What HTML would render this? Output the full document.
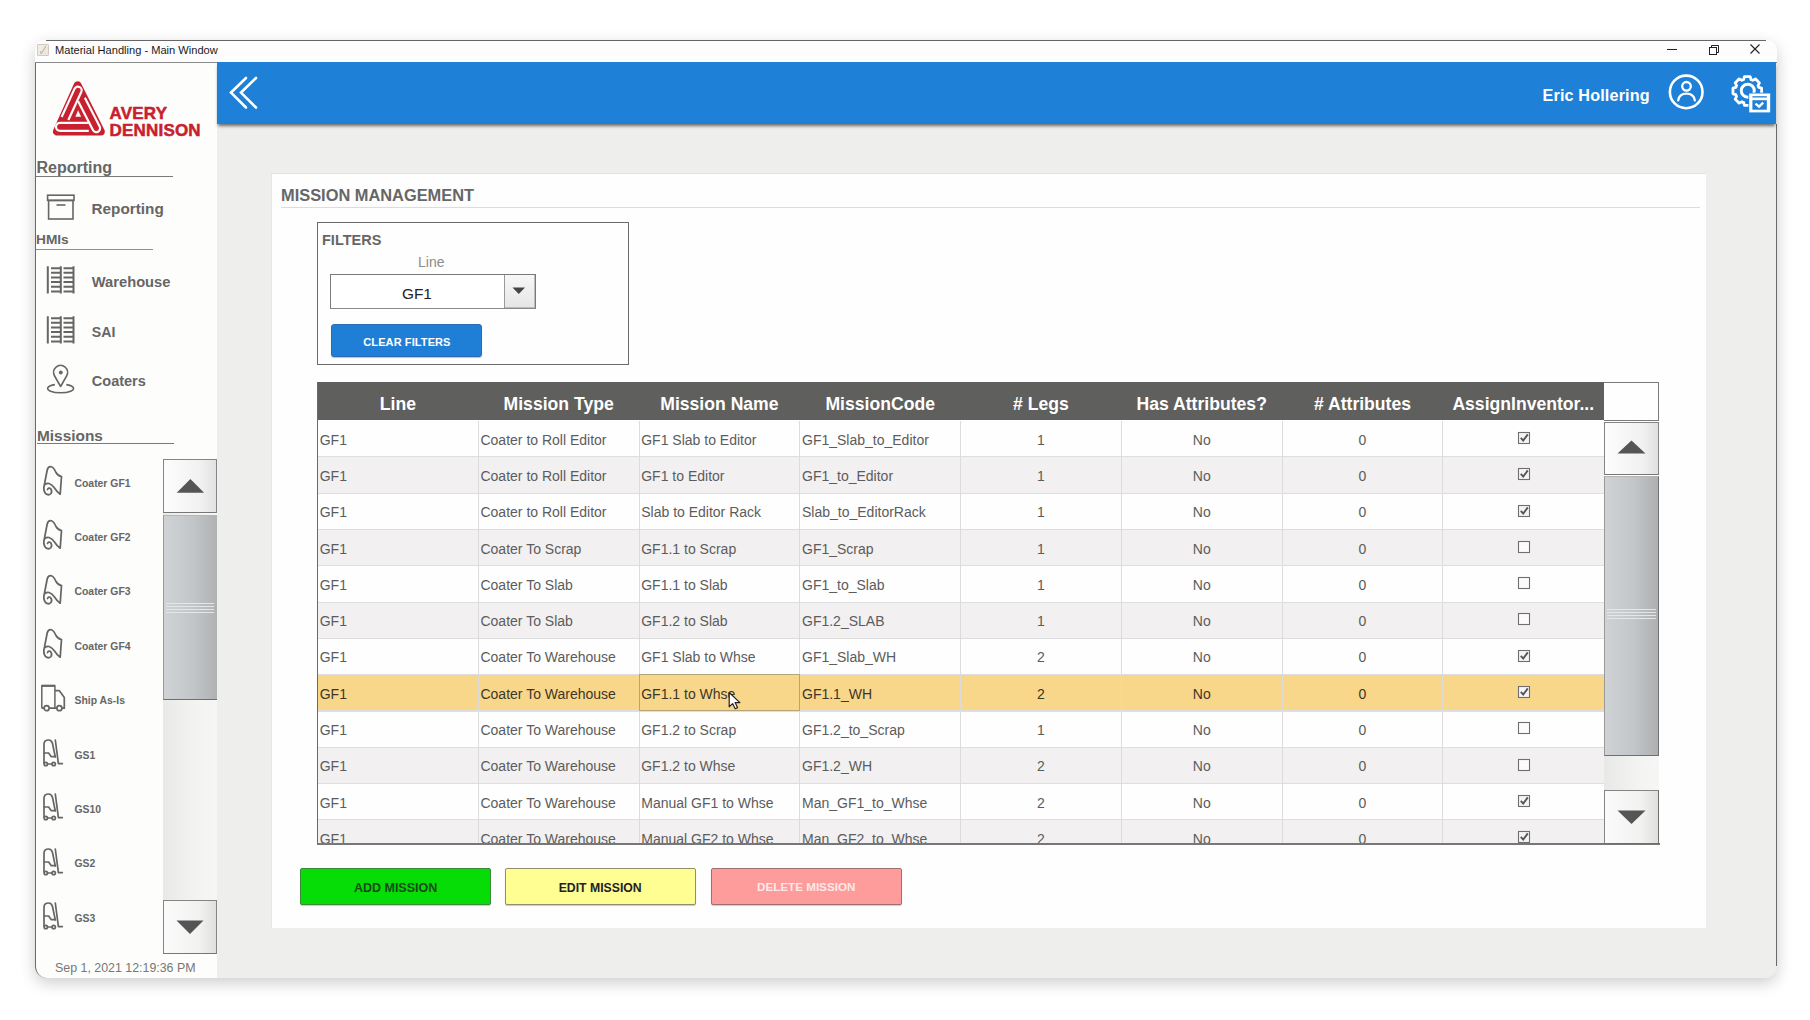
<!DOCTYPE html><html><head><meta charset="utf-8"><title>Material Handling</title><style>
*{margin:0;padding:0;box-sizing:border-box}
html,body{width:1810px;height:1020px;overflow:hidden;background:#fff;font-family:"Liberation Sans", sans-serif}
.a{position:absolute}
.t{position:absolute;white-space:nowrap;line-height:1}
</style></head><body><div class="a" style="left:35px;top:40px;width:1742px;height:938px;border-radius:12px;box-shadow:0 5px 16px rgba(0,0,0,0.2);background:#eeeeed"></div>
<div class="a" style="left:35px;top:40px;width:1742px;height:23px;background:#fdfdfd;border-radius:10px 10px 0 0"></div>
<div class="a" style="left:46px;top:40px;width:1720px;height:1.2px;background:#666"></div>
<div class="a" style="left:35px;top:62px;width:1742px;height:1px;background:#8a8a8a"></div>
<div class="a" style="left:37px;top:44px;width:12px;height:12px;border:1px solid #cfcac2;background:linear-gradient(135deg,#f4efe6,#e9e4dc);border-radius:1px"></div>
<svg class="a" style="left:37px;top:44px" width="12" height="12"><path d="M4 10 L9 2" stroke="#c9b9a0" stroke-width="1.2"/><path d="M3.5 7 L4 10" stroke="#b8b8d0" stroke-width="1"/></svg>
<div class="t" style="left:55px;top:44.60px;font-size:11.1px;font-weight:400;color:#1a1a1a;">Material Handling - Main Window</div>
<div class="a" style="left:1667px;top:49px;width:10px;height:1px;background:#222"></div>
<svg class="a" style="left:1706px;top:43px" width="14" height="14"><rect x="3.5" y="4.5" width="7" height="7" fill="none" stroke="#222" stroke-width="1"/><path d="M5.5 4.5 V2.5 H12.5 V9.5 H10.5" fill="none" stroke="#222" stroke-width="1"/></svg>
<svg class="a" style="left:1748px;top:42px" width="14" height="14"><path d="M2.5 2.5 L11.5 11.5 M11.5 2.5 L2.5 11.5" stroke="#222" stroke-width="1.1"/></svg>
<div class="a" style="left:35px;top:63px;width:182px;height:915px;background:#fdfdfc;border-left:1.5px solid #6a6a6a;border-radius:0 0 0 12px"></div>
<div class="a" style="left:1775.5px;top:124px;width:1.5px;height:842px;background:#6a6a6a"></div>
<div class="a" style="left:217px;top:62px;width:1559px;height:62px;background:#1f80d8;box-shadow:0 3px 3px -1px rgba(0,0,0,0.55)"></div>
<svg class="a" style="left:224px;top:72px" width="40" height="42"><path d="M22 6 L7 20.6 L22 35.5" fill="none" stroke="#fff" stroke-width="2.6" stroke-linecap="round" stroke-linejoin="miter"/><path d="M32 6 L17 20.6 L32 35.5" fill="none" stroke="#fff" stroke-width="2.6" stroke-linecap="round" stroke-linejoin="miter"/></svg>
<div class="t" style="left:1542.5px;top:87.29px;font-size:16.2px;font-weight:700;color:#fff;letter-spacing:0.15px">Eric Hollering</div>
<svg class="a" style="left:1666px;top:72px" width="41" height="41"><circle cx="20.2" cy="19.9" r="16.3" fill="none" stroke="#fff" stroke-width="2.6"/><circle cx="20.5" cy="14.3" r="4.3" fill="none" stroke="#fff" stroke-width="2.3"/><path d="M12.2 28.3 Q13.2 21.6 20.5 21.6 Q27.8 21.6 28.8 28.3" fill="none" stroke="#fff" stroke-width="2.3" stroke-linecap="round"/></svg>
<svg class="a" style="left:1730px;top:74px" width="44" height="42"><path d="M13.59 5.59 L14.45 2.68 L20.15 2.68 L21.01 5.59 L21.60 5.80 L22.18 6.04 L22.75 6.31 L25.41 4.86 L29.44 8.89 L27.99 11.55 L28.26 12.12 L28.50 12.70 L28.71 13.29 L31.62 14.15 L31.62 19.85 L28.71 20.71 L28.50 21.30 L28.26 21.88 L27.99 22.45 L29.44 25.11 L25.41 29.14 L22.75 27.69 L22.18 27.96 L21.60 28.20 L21.01 28.41 L20.15 31.32 L14.45 31.32 L13.59 28.41 L13.00 28.20 L12.42 27.96 L11.85 27.69 L9.19 29.14 L5.16 25.11 L6.61 22.45 L6.34 21.88 L6.10 21.30 L5.89 20.71 L2.98 19.85 L2.98 14.15 L5.89 13.29 L6.10 12.70 L6.34 12.12 L6.61 11.55 L5.16 8.89 L9.19 4.86 L11.85 6.31 L12.42 6.04 L13.00 5.80 Z" fill="none" stroke="#fff" stroke-width="2.8" stroke-linejoin="round"/><circle cx="17.8" cy="16.7" r="6.5" fill="none" stroke="#fff" stroke-width="3"/><rect x="18.4" y="18.7" width="22.6" height="20.5" fill="#1f80d8"/><rect x="19.2" y="19.5" width="21" height="18.9" fill="#fff"/><rect x="22.4" y="22.2" width="14.4" height="1.3" fill="#1f80d8"/><rect x="22.4" y="26.2" width="14.4" height="9.5" fill="#1f80d8"/><path d="M25.5 29.6 L29.1 32.6 L33.2 28.7" fill="none" stroke="#fff" stroke-width="2.4"/></svg>
<svg class="a" style="left:48px;top:76px" width="60" height="64" viewBox="0 0 60 64"><path d="M29.6 9.3 L9 55.5 L52.8 55.5 Z" fill="#c8202f" stroke="#c8202f" stroke-width="8" stroke-linejoin="round"/><g fill="none" stroke="#fdfbfb" stroke-width="2.2"><path d="M20.36 44.04 L33.36 15.74 A3.7 3.7 0 0 0 26.64 12.66 L13.64 40.96"/><path d="M40.80 46.80 L12.00 46.80 A4.0 4.0 0 0 0 12.00 54.80 L40.80 54.80"/><path d="M30.12 25.24 L44.92 54.04 A3.8 3.8 0 0 0 51.68 50.56 L36.88 21.76"/></g><path d="M30.1 34.2 L27.4 40.8 L33.1 40.8 Z" fill="#fdfbfb"/></svg>
<div class="t" style="left:109.5px;top:105.31px;font-size:17px;font-weight:700;color:#c8202f;letter-spacing:0.2px;-webkit-text-stroke:0.5px #c8202f">AVERY</div>
<div class="t" style="left:109.5px;top:121.61px;font-size:17px;font-weight:700;color:#c8202f;letter-spacing:0.2px;-webkit-text-stroke:0.5px #c8202f">DENNISON</div>
<div class="t" style="left:36.5px;top:159.96px;font-size:16px;font-weight:700;color:#666;">Reporting</div>
<div class="a" style="left:36px;top:176px;width:137px;height:1px;background:#7a7a7a"></div>
<svg class="a" style="left:45px;top:192px" width="32" height="30"><rect x="2.6" y="3.2" width="26.4" height="5.2" fill="none" stroke="#666" stroke-width="1.6"/><rect x="3.6" y="8.4" width="24.4" height="18.6" fill="none" stroke="#666" stroke-width="1.6"/><path d="M11.5 13 H20.5" stroke="#666" stroke-width="1.6"/></svg>
<div class="t" style="left:91.5px;top:201.05px;font-size:15.3px;font-weight:700;color:#666;">Reporting</div>
<div class="t" style="left:36px;top:233.40px;font-size:13.7px;font-weight:700;color:#666;">HMIs</div>
<div class="a" style="left:36px;top:248.5px;width:117px;height:1.5px;background:#8f8f8f"></div>
<svg class="a" style="left:40px;top:260px" width="40" height="40"><g stroke="#666" stroke-width="2"><path d="M7.8 6.3 V33.5 M20.8 6.3 V33.5 M33.5 6.3 V33.5"/><path d="M11 8.2 H20.8 M23.5 8.2 H33.5"/><path d="M11 12.7 H20.8 M23.5 12.7 H33.5"/><path d="M11 17.5 H20.8 M23.5 17.5 H33.5"/><path d="M11 22 H20.8 M23.5 22 H33.5"/><path d="M11 26.7 H20.8 M23.5 26.7 H33.5"/><path d="M11 31.4 H20.8 M23.5 31.4 H33.5"/></g></svg>
<div class="t" style="left:91.8px;top:274.56px;font-size:14.7px;font-weight:700;color:#666;">Warehouse</div>
<svg class="a" style="left:40px;top:310px" width="40" height="40"><g stroke="#666" stroke-width="2"><path d="M7.8 6.3 V33.5 M20.8 6.3 V33.5 M33.5 6.3 V33.5"/><path d="M11 8.2 H20.8 M23.5 8.2 H33.5"/><path d="M11 12.7 H20.8 M23.5 12.7 H33.5"/><path d="M11 17.5 H20.8 M23.5 17.5 H33.5"/><path d="M11 22 H20.8 M23.5 22 H33.5"/><path d="M11 26.7 H20.8 M23.5 26.7 H33.5"/><path d="M11 31.4 H20.8 M23.5 31.4 H33.5"/></g></svg>
<div class="t" style="left:91.8px;top:325.06px;font-size:14.1px;font-weight:700;color:#666;">SAI</div>
<svg class="a" style="left:40px;top:360px" width="40" height="40"><g fill="none" stroke="#666" stroke-width="1.6"><path d="M20.6 26.5 L14.6 16 A7 7 0 1 1 26.6 16 Z" stroke-linejoin="round"/><path d="M14.9 24.6 A13 4.3 0 1 0 26.3 24.6"/></g><circle cx="20.8" cy="12.5" r="1.9" fill="#666"/></svg>
<div class="t" style="left:91.8px;top:374.23px;font-size:14.5px;font-weight:700;color:#666;">Coaters</div>
<div class="t" style="left:37px;top:427.96px;font-size:15.4px;font-weight:700;color:#666;">Missions</div>
<div class="a" style="left:37px;top:443px;width:137px;height:1px;background:#7a7a7a"></div>
<svg class="a" style="left:38px;top:460.0px" width="40" height="40"><path d="M22.2 34.2 L23.5 16.5 Q20 16 18 12.5 Q15.5 6.5 12.5 6.5 Q10 6.5 9.2 10 L6.5 24 Q4.8 30 7.5 33.5 Q10.5 36 13 33.5 Q14.5 31 12.5 28.5 Q10.5 27.2 9.5 29.5 M7 24.5 Q9 23 11 23.5 Q14 24.5 16.5 28 Q19 32 22.2 34.2" fill="none" stroke="#666" stroke-width="1.75" stroke-linejoin="round" stroke-linecap="round"/></svg>
<div class="t" style="left:74.5px;top:478.50px;font-size:10.4px;font-weight:700;color:#666;">Coater GF1</div>
<svg class="a" style="left:38px;top:514.4px" width="40" height="40"><path d="M22.2 34.2 L23.5 16.5 Q20 16 18 12.5 Q15.5 6.5 12.5 6.5 Q10 6.5 9.2 10 L6.5 24 Q4.8 30 7.5 33.5 Q10.5 36 13 33.5 Q14.5 31 12.5 28.5 Q10.5 27.2 9.5 29.5 M7 24.5 Q9 23 11 23.5 Q14 24.5 16.5 28 Q19 32 22.2 34.2" fill="none" stroke="#666" stroke-width="1.75" stroke-linejoin="round" stroke-linecap="round"/></svg>
<div class="t" style="left:74.5px;top:532.90px;font-size:10.4px;font-weight:700;color:#666;">Coater GF2</div>
<svg class="a" style="left:38px;top:568.8px" width="40" height="40"><path d="M22.2 34.2 L23.5 16.5 Q20 16 18 12.5 Q15.5 6.5 12.5 6.5 Q10 6.5 9.2 10 L6.5 24 Q4.8 30 7.5 33.5 Q10.5 36 13 33.5 Q14.5 31 12.5 28.5 Q10.5 27.2 9.5 29.5 M7 24.5 Q9 23 11 23.5 Q14 24.5 16.5 28 Q19 32 22.2 34.2" fill="none" stroke="#666" stroke-width="1.75" stroke-linejoin="round" stroke-linecap="round"/></svg>
<div class="t" style="left:74.5px;top:587.30px;font-size:10.4px;font-weight:700;color:#666;">Coater GF3</div>
<svg class="a" style="left:38px;top:623.2px" width="40" height="40"><path d="M22.2 34.2 L23.5 16.5 Q20 16 18 12.5 Q15.5 6.5 12.5 6.5 Q10 6.5 9.2 10 L6.5 24 Q4.8 30 7.5 33.5 Q10.5 36 13 33.5 Q14.5 31 12.5 28.5 Q10.5 27.2 9.5 29.5 M7 24.5 Q9 23 11 23.5 Q14 24.5 16.5 28 Q19 32 22.2 34.2" fill="none" stroke="#666" stroke-width="1.75" stroke-linejoin="round" stroke-linecap="round"/></svg>
<div class="t" style="left:74.5px;top:641.70px;font-size:10.4px;font-weight:700;color:#666;">Coater GF4</div>
<svg class="a" style="left:38px;top:679.8000000000001px" width="40" height="40"><g fill="none" stroke="#666" stroke-width="1.7" stroke-linejoin="round"><path d="M3.8 28.2 V5.6 H16.9 V28.2" stroke-width="1.5"/><path d="M3.8 5.9 H16.9" stroke-width="2"/><path d="M16.9 10.6 H21.2 L26.3 17.6 V28.2 H23.8 M19 28.2 H11 M6.1 28.2 H3.8"/><circle cx="8.6" cy="28.2" r="2.5"/><circle cx="21.4" cy="28.2" r="2.5"/></g></svg>
<div class="t" style="left:74.5px;top:696.10px;font-size:10.4px;font-weight:700;color:#666;">Ship As-Is</div>
<svg class="a" style="left:38px;top:735.0px" width="40" height="40"><g fill="none" stroke="#666" stroke-width="1.7" stroke-linecap="round" stroke-linejoin="round"><path d="M6 28 V9 Q6 5 10.6 5 Q13.5 5 14.5 8.5 L17.3 22"/><path d="M6.3 18 H10.6 L13.3 21.7 H17.3"/><circle cx="7.8" cy="29" r="1.7"/><circle cx="15.7" cy="29" r="1.7"/><path d="M9.5 29 H14"/><path d="M17.3 5 L20.4 28.6 H24.3"/></g></svg>
<div class="t" style="left:74.5px;top:750.50px;font-size:10.4px;font-weight:700;color:#666;">GS1</div>
<svg class="a" style="left:38px;top:789.4px" width="40" height="40"><g fill="none" stroke="#666" stroke-width="1.7" stroke-linecap="round" stroke-linejoin="round"><path d="M6 28 V9 Q6 5 10.6 5 Q13.5 5 14.5 8.5 L17.3 22"/><path d="M6.3 18 H10.6 L13.3 21.7 H17.3"/><circle cx="7.8" cy="29" r="1.7"/><circle cx="15.7" cy="29" r="1.7"/><path d="M9.5 29 H14"/><path d="M17.3 5 L20.4 28.6 H24.3"/></g></svg>
<div class="t" style="left:74.5px;top:804.90px;font-size:10.4px;font-weight:700;color:#666;">GS10</div>
<svg class="a" style="left:38px;top:843.8px" width="40" height="40"><g fill="none" stroke="#666" stroke-width="1.7" stroke-linecap="round" stroke-linejoin="round"><path d="M6 28 V9 Q6 5 10.6 5 Q13.5 5 14.5 8.5 L17.3 22"/><path d="M6.3 18 H10.6 L13.3 21.7 H17.3"/><circle cx="7.8" cy="29" r="1.7"/><circle cx="15.7" cy="29" r="1.7"/><path d="M9.5 29 H14"/><path d="M17.3 5 L20.4 28.6 H24.3"/></g></svg>
<div class="t" style="left:74.5px;top:859.30px;font-size:10.4px;font-weight:700;color:#666;">GS2</div>
<svg class="a" style="left:38px;top:898.2px" width="40" height="40"><g fill="none" stroke="#666" stroke-width="1.7" stroke-linecap="round" stroke-linejoin="round"><path d="M6 28 V9 Q6 5 10.6 5 Q13.5 5 14.5 8.5 L17.3 22"/><path d="M6.3 18 H10.6 L13.3 21.7 H17.3"/><circle cx="7.8" cy="29" r="1.7"/><circle cx="15.7" cy="29" r="1.7"/><path d="M9.5 29 H14"/><path d="M17.3 5 L20.4 28.6 H24.3"/></g></svg>
<div class="t" style="left:74.5px;top:913.70px;font-size:10.4px;font-weight:700;color:#666;">GS3</div>
<div class="a" style="left:163px;top:513px;width:54px;height:388px;background:linear-gradient(90deg,#e9e9e8,#f3f3f2 60%,#f6f6f5)"></div>
<div class="a" style="left:163px;top:459px;width:54px;height:54px;background:linear-gradient(90deg,#fdfdfd,#f1f1f1 70%,#e2e2e2);border:1px solid #858585;border-bottom:1.5px solid #777"></div>
<svg class="a" style="left:163px;top:459px" width="54" height="54"><path d="M13.7 33.7 L27.4 20 L41.1 33.7 Z" fill="#555"/></svg>
<div class="a" style="left:163px;top:515px;width:54px;height:185px;background:linear-gradient(90deg,#cfd3d6,#c2c6c9 55%,#b0b1b2);border-left:1px solid #999;border-bottom:1.5px solid #6f6f6f;border-top:1px solid #b5b5b5"></div>
<div class="a" style="left:166px;top:603px;width:48px;height:1px;background:#e4e6e8"></div><div class="a" style="left:166px;top:606px;width:48px;height:1px;background:#e4e6e8"></div><div class="a" style="left:166px;top:609px;width:48px;height:1px;background:#e4e6e8"></div><div class="a" style="left:166px;top:612px;width:48px;height:1px;background:#e4e6e8"></div>
<div class="a" style="left:163px;top:900px;width:54px;height:54px;background:linear-gradient(90deg,#fbfbfb,#f1f1f0 70%,#dfdfde);border:1px solid #858585;border-bottom:1.5px solid #777"></div>
<svg class="a" style="left:163px;top:900px" width="54" height="54"><path d="M13.5 20.5 L40.5 20.5 L27 34 Z" fill="#555"/></svg>
<div class="t" style="left:55px;top:962.00px;font-size:12.4px;font-weight:400;color:#777;">Sep 1, 2021 12:19:36 PM</div>
<div class="a" style="left:271px;top:172.5px;width:1434.5px;height:755px;background:#fefefe;border-top:1px solid #e2e2e2;border-left:1px solid #e6e6e6"></div>
<div class="t" style="left:281px;top:186.62px;font-size:16.4px;font-weight:700;color:#666;">MISSION MANAGEMENT</div>
<div class="a" style="left:281px;top:207px;width:1419px;height:1px;background:#dcdcdc"></div>
<div class="a" style="left:316.5px;top:221.5px;width:312.5px;height:143px;border:1.5px solid #6a6a6a;background:#fefefe"></div>
<div class="t" style="left:322px;top:232.73px;font-size:14.5px;font-weight:700;color:#666;">FILTERS</div>
<div class="t" style="left:418px;top:255.15px;font-size:14px;font-weight:400;color:#8c8c8c;">Line</div>
<div class="a" style="left:330px;top:274px;width:206px;height:35px;border:1px solid #7a7a7a;border-bottom:1.5px solid #8a8a8a;background:#fff"></div>
<div class="a" style="left:503.5px;top:275px;width:31.5px;height:33px;border-left:1px solid #9a9a9a;background:linear-gradient(180deg,#f7f7f7,#e6e6e6);box-shadow:inset -1px -1px 0 #bcbcbc"></div>
<svg class="a" style="left:503px;top:275px" width="32" height="33"><path d="M9.5 12.5 L22 12.5 L15.75 19 Z" fill="#444"/></svg>
<div class="t" style="left:402px;top:285.96px;font-size:15.4px;font-weight:400;color:#222;">GF1</div>
<div class="a" style="left:331px;top:323.5px;width:151px;height:33.5px;background:#1f7fd7;border:1px solid #2b6cb3;border-radius:3px;box-shadow:0 1px 1px rgba(0,0,0,0.25)"></div>
<div class="t" style="left:363.3px;top:336.69px;font-size:11px;font-weight:700;color:#fff;letter-spacing:0.1px">CLEAR FILTERS</div>
<div class="a" style="left:317.5px;top:420.5px;width:1286.2px;height:423.3px;overflow:hidden;background:#fefefe">
<div class="a" style="left:0;top:0.00px;width:1286.2px;height:36.30px;background:#fefefe"></div>
<div class="a" style="left:0;top:36.30px;width:1286.2px;height:36.30px;background:#f2f0f0"></div>
<div class="a" style="left:0;top:35.80px;width:1286.2px;height:1.2px;background:#dedede"></div>
<div class="a" style="left:0;top:72.60px;width:1286.2px;height:36.30px;background:#fefefe"></div>
<div class="a" style="left:0;top:72.10px;width:1286.2px;height:1.2px;background:#dedede"></div>
<div class="a" style="left:0;top:108.90px;width:1286.2px;height:36.30px;background:#f2f0f0"></div>
<div class="a" style="left:0;top:108.40px;width:1286.2px;height:1.2px;background:#dedede"></div>
<div class="a" style="left:0;top:145.20px;width:1286.2px;height:36.30px;background:#fefefe"></div>
<div class="a" style="left:0;top:144.70px;width:1286.2px;height:1.2px;background:#dedede"></div>
<div class="a" style="left:0;top:181.50px;width:1286.2px;height:36.30px;background:#f2f0f0"></div>
<div class="a" style="left:0;top:181.00px;width:1286.2px;height:1.2px;background:#dedede"></div>
<div class="a" style="left:0;top:217.80px;width:1286.2px;height:36.30px;background:#fefefe"></div>
<div class="a" style="left:0;top:217.30px;width:1286.2px;height:1.2px;background:#dedede"></div>
<div class="a" style="left:0;top:254.10px;width:1286.2px;height:36.30px;background:#f9d78a"></div>
<div class="a" style="left:0;top:253.60px;width:1286.2px;height:1.2px;background:#dedede"></div>
<div class="a" style="left:0;top:290.40px;width:1286.2px;height:36.30px;background:#fefefe"></div>
<div class="a" style="left:0;top:289.90px;width:1286.2px;height:1.2px;background:#dedede"></div>
<div class="a" style="left:0;top:326.70px;width:1286.2px;height:36.30px;background:#f2f0f0"></div>
<div class="a" style="left:0;top:326.20px;width:1286.2px;height:1.2px;background:#dedede"></div>
<div class="a" style="left:0;top:363.00px;width:1286.2px;height:36.30px;background:#fefefe"></div>
<div class="a" style="left:0;top:362.50px;width:1286.2px;height:1.2px;background:#dedede"></div>
<div class="a" style="left:0;top:399.30px;width:1286.2px;height:36.30px;background:#f2f0f0"></div>
<div class="a" style="left:0;top:398.80px;width:1286.2px;height:1.2px;background:#dedede"></div>
<div class="a" style="left:160.27px;top:0;width:1px;height:423.3px;background:#dcdcdc"></div>
<div class="a" style="left:321.04px;top:0;width:1px;height:423.3px;background:#dcdcdc"></div>
<div class="a" style="left:481.81px;top:0;width:1px;height:423.3px;background:#dcdcdc"></div>
<div class="a" style="left:642.58px;top:0;width:1px;height:423.3px;background:#dcdcdc"></div>
<div class="a" style="left:803.35px;top:0;width:1px;height:423.3px;background:#dcdcdc"></div>
<div class="a" style="left:964.12px;top:0;width:1px;height:423.3px;background:#dcdcdc"></div>
<div class="a" style="left:1124.89px;top:0;width:1px;height:423.3px;background:#dcdcdc"></div>
<div class="a" style="left:321.04px;top:253.60px;width:161.77px;height:36.80px;border:1px solid #b5a577"></div>
<div class="t" style="left:2.2px;top:12.15px;font-size:14px;font-weight:400;color:#5c5c5c;">GF1</div>
<div class="t" style="left:162.97px;top:12.15px;font-size:14px;font-weight:400;color:#5c5c5c;">Coater to Roll Editor</div>
<div class="t" style="left:323.74px;top:12.15px;font-size:14px;font-weight:400;color:#5c5c5c;">GF1 Slab to Editor</div>
<div class="t" style="left:484.51000000000005px;top:12.15px;font-size:14px;font-weight:400;color:#5c5c5c;">GF1_Slab_to_Editor</div>
<div class="t" style="left:673.47px;width:100px;text-align:center;top:12.15px;font-size:14px;font-weight:400;color:#5c5c5c;">1</div>
<div class="t" style="left:834.24px;width:100px;text-align:center;top:12.15px;font-size:14px;font-weight:400;color:#5c5c5c;">No</div>
<div class="t" style="left:995.01px;width:100px;text-align:center;top:12.15px;font-size:14px;font-weight:400;color:#5c5c5c;">0</div>
<svg class="a" style="left:1199.28px;top:10.40px" width="14" height="14"><rect x="1.5" y="1.5" width="11" height="11" fill="#f4f4f4" stroke="#6f6f6f" stroke-width="1.1"/><path d="M3.8 6.8 L6.2 9.6 L10.8 3.4" fill="none" stroke="#555" stroke-width="1.9"/></svg>
<div class="t" style="left:2.2px;top:48.45px;font-size:14px;font-weight:400;color:#5c5c5c;">GF1</div>
<div class="t" style="left:162.97px;top:48.45px;font-size:14px;font-weight:400;color:#5c5c5c;">Coater to Roll Editor</div>
<div class="t" style="left:323.74px;top:48.45px;font-size:14px;font-weight:400;color:#5c5c5c;">GF1 to Editor</div>
<div class="t" style="left:484.51000000000005px;top:48.45px;font-size:14px;font-weight:400;color:#5c5c5c;">GF1_to_Editor</div>
<div class="t" style="left:673.47px;width:100px;text-align:center;top:48.45px;font-size:14px;font-weight:400;color:#5c5c5c;">1</div>
<div class="t" style="left:834.24px;width:100px;text-align:center;top:48.45px;font-size:14px;font-weight:400;color:#5c5c5c;">No</div>
<div class="t" style="left:995.01px;width:100px;text-align:center;top:48.45px;font-size:14px;font-weight:400;color:#5c5c5c;">0</div>
<svg class="a" style="left:1199.28px;top:46.70px" width="14" height="14"><rect x="1.5" y="1.5" width="11" height="11" fill="#f4f4f4" stroke="#6f6f6f" stroke-width="1.1"/><path d="M3.8 6.8 L6.2 9.6 L10.8 3.4" fill="none" stroke="#555" stroke-width="1.9"/></svg>
<div class="t" style="left:2.2px;top:84.75px;font-size:14px;font-weight:400;color:#5c5c5c;">GF1</div>
<div class="t" style="left:162.97px;top:84.75px;font-size:14px;font-weight:400;color:#5c5c5c;">Coater to Roll Editor</div>
<div class="t" style="left:323.74px;top:84.75px;font-size:14px;font-weight:400;color:#5c5c5c;">Slab to Editor Rack</div>
<div class="t" style="left:484.51000000000005px;top:84.75px;font-size:14px;font-weight:400;color:#5c5c5c;">Slab_to_EditorRack</div>
<div class="t" style="left:673.47px;width:100px;text-align:center;top:84.75px;font-size:14px;font-weight:400;color:#5c5c5c;">1</div>
<div class="t" style="left:834.24px;width:100px;text-align:center;top:84.75px;font-size:14px;font-weight:400;color:#5c5c5c;">No</div>
<div class="t" style="left:995.01px;width:100px;text-align:center;top:84.75px;font-size:14px;font-weight:400;color:#5c5c5c;">0</div>
<svg class="a" style="left:1199.28px;top:83.00px" width="14" height="14"><rect x="1.5" y="1.5" width="11" height="11" fill="#f4f4f4" stroke="#6f6f6f" stroke-width="1.1"/><path d="M3.8 6.8 L6.2 9.6 L10.8 3.4" fill="none" stroke="#555" stroke-width="1.9"/></svg>
<div class="t" style="left:2.2px;top:121.05px;font-size:14px;font-weight:400;color:#5c5c5c;">GF1</div>
<div class="t" style="left:162.97px;top:121.05px;font-size:14px;font-weight:400;color:#5c5c5c;">Coater To Scrap</div>
<div class="t" style="left:323.74px;top:121.05px;font-size:14px;font-weight:400;color:#5c5c5c;">GF1.1 to Scrap</div>
<div class="t" style="left:484.51000000000005px;top:121.05px;font-size:14px;font-weight:400;color:#5c5c5c;">GF1_Scrap</div>
<div class="t" style="left:673.47px;width:100px;text-align:center;top:121.05px;font-size:14px;font-weight:400;color:#5c5c5c;">1</div>
<div class="t" style="left:834.24px;width:100px;text-align:center;top:121.05px;font-size:14px;font-weight:400;color:#5c5c5c;">No</div>
<div class="t" style="left:995.01px;width:100px;text-align:center;top:121.05px;font-size:14px;font-weight:400;color:#5c5c5c;">0</div>
<svg class="a" style="left:1199.28px;top:119.30px" width="14" height="14"><rect x="1.5" y="1.5" width="11" height="11" fill="#fbfbfb" stroke="#6f6f6f" stroke-width="1.1"/></svg>
<div class="t" style="left:2.2px;top:157.35px;font-size:14px;font-weight:400;color:#5c5c5c;">GF1</div>
<div class="t" style="left:162.97px;top:157.35px;font-size:14px;font-weight:400;color:#5c5c5c;">Coater To Slab</div>
<div class="t" style="left:323.74px;top:157.35px;font-size:14px;font-weight:400;color:#5c5c5c;">GF1.1 to Slab</div>
<div class="t" style="left:484.51000000000005px;top:157.35px;font-size:14px;font-weight:400;color:#5c5c5c;">GF1_to_Slab</div>
<div class="t" style="left:673.47px;width:100px;text-align:center;top:157.35px;font-size:14px;font-weight:400;color:#5c5c5c;">1</div>
<div class="t" style="left:834.24px;width:100px;text-align:center;top:157.35px;font-size:14px;font-weight:400;color:#5c5c5c;">No</div>
<div class="t" style="left:995.01px;width:100px;text-align:center;top:157.35px;font-size:14px;font-weight:400;color:#5c5c5c;">0</div>
<svg class="a" style="left:1199.28px;top:155.60px" width="14" height="14"><rect x="1.5" y="1.5" width="11" height="11" fill="#fbfbfb" stroke="#6f6f6f" stroke-width="1.1"/></svg>
<div class="t" style="left:2.2px;top:193.65px;font-size:14px;font-weight:400;color:#5c5c5c;">GF1</div>
<div class="t" style="left:162.97px;top:193.65px;font-size:14px;font-weight:400;color:#5c5c5c;">Coater To Slab</div>
<div class="t" style="left:323.74px;top:193.65px;font-size:14px;font-weight:400;color:#5c5c5c;">GF1.2 to Slab</div>
<div class="t" style="left:484.51000000000005px;top:193.65px;font-size:14px;font-weight:400;color:#5c5c5c;">GF1.2_SLAB</div>
<div class="t" style="left:673.47px;width:100px;text-align:center;top:193.65px;font-size:14px;font-weight:400;color:#5c5c5c;">1</div>
<div class="t" style="left:834.24px;width:100px;text-align:center;top:193.65px;font-size:14px;font-weight:400;color:#5c5c5c;">No</div>
<div class="t" style="left:995.01px;width:100px;text-align:center;top:193.65px;font-size:14px;font-weight:400;color:#5c5c5c;">0</div>
<svg class="a" style="left:1199.28px;top:191.90px" width="14" height="14"><rect x="1.5" y="1.5" width="11" height="11" fill="#fbfbfb" stroke="#6f6f6f" stroke-width="1.1"/></svg>
<div class="t" style="left:2.2px;top:229.95px;font-size:14px;font-weight:400;color:#5c5c5c;">GF1</div>
<div class="t" style="left:162.97px;top:229.95px;font-size:14px;font-weight:400;color:#5c5c5c;">Coater To Warehouse</div>
<div class="t" style="left:323.74px;top:229.95px;font-size:14px;font-weight:400;color:#5c5c5c;">GF1 Slab to Whse</div>
<div class="t" style="left:484.51000000000005px;top:229.95px;font-size:14px;font-weight:400;color:#5c5c5c;">GF1_Slab_WH</div>
<div class="t" style="left:673.47px;width:100px;text-align:center;top:229.95px;font-size:14px;font-weight:400;color:#5c5c5c;">2</div>
<div class="t" style="left:834.24px;width:100px;text-align:center;top:229.95px;font-size:14px;font-weight:400;color:#5c5c5c;">No</div>
<div class="t" style="left:995.01px;width:100px;text-align:center;top:229.95px;font-size:14px;font-weight:400;color:#5c5c5c;">0</div>
<svg class="a" style="left:1199.28px;top:228.20px" width="14" height="14"><rect x="1.5" y="1.5" width="11" height="11" fill="#f4f4f4" stroke="#6f6f6f" stroke-width="1.1"/><path d="M3.8 6.8 L6.2 9.6 L10.8 3.4" fill="none" stroke="#555" stroke-width="1.9"/></svg>
<div class="t" style="left:2.2px;top:266.25px;font-size:14px;font-weight:400;color:#3d3628;">GF1</div>
<div class="t" style="left:162.97px;top:266.25px;font-size:14px;font-weight:400;color:#3d3628;">Coater To Warehouse</div>
<div class="t" style="left:323.74px;top:266.25px;font-size:14px;font-weight:400;color:#3d3628;">GF1.1 to Whse</div>
<div class="t" style="left:484.51000000000005px;top:266.25px;font-size:14px;font-weight:400;color:#3d3628;">GF1.1_WH</div>
<div class="t" style="left:673.47px;width:100px;text-align:center;top:266.25px;font-size:14px;font-weight:400;color:#3d3628;">2</div>
<div class="t" style="left:834.24px;width:100px;text-align:center;top:266.25px;font-size:14px;font-weight:400;color:#3d3628;">No</div>
<div class="t" style="left:995.01px;width:100px;text-align:center;top:266.25px;font-size:14px;font-weight:400;color:#3d3628;">0</div>
<svg class="a" style="left:1199.28px;top:264.50px" width="14" height="14"><rect x="1.5" y="1.5" width="11" height="11" fill="#f4f4f4" stroke="#6f6f6f" stroke-width="1.1"/><path d="M3.8 6.8 L6.2 9.6 L10.8 3.4" fill="none" stroke="#555" stroke-width="1.9"/></svg>
<div class="t" style="left:2.2px;top:302.55px;font-size:14px;font-weight:400;color:#5c5c5c;">GF1</div>
<div class="t" style="left:162.97px;top:302.55px;font-size:14px;font-weight:400;color:#5c5c5c;">Coater To Warehouse</div>
<div class="t" style="left:323.74px;top:302.55px;font-size:14px;font-weight:400;color:#5c5c5c;">GF1.2 to Scrap</div>
<div class="t" style="left:484.51000000000005px;top:302.55px;font-size:14px;font-weight:400;color:#5c5c5c;">GF1.2_to_Scrap</div>
<div class="t" style="left:673.47px;width:100px;text-align:center;top:302.55px;font-size:14px;font-weight:400;color:#5c5c5c;">1</div>
<div class="t" style="left:834.24px;width:100px;text-align:center;top:302.55px;font-size:14px;font-weight:400;color:#5c5c5c;">No</div>
<div class="t" style="left:995.01px;width:100px;text-align:center;top:302.55px;font-size:14px;font-weight:400;color:#5c5c5c;">0</div>
<svg class="a" style="left:1199.28px;top:300.80px" width="14" height="14"><rect x="1.5" y="1.5" width="11" height="11" fill="#fbfbfb" stroke="#6f6f6f" stroke-width="1.1"/></svg>
<div class="t" style="left:2.2px;top:338.85px;font-size:14px;font-weight:400;color:#5c5c5c;">GF1</div>
<div class="t" style="left:162.97px;top:338.85px;font-size:14px;font-weight:400;color:#5c5c5c;">Coater To Warehouse</div>
<div class="t" style="left:323.74px;top:338.85px;font-size:14px;font-weight:400;color:#5c5c5c;">GF1.2 to Whse</div>
<div class="t" style="left:484.51000000000005px;top:338.85px;font-size:14px;font-weight:400;color:#5c5c5c;">GF1.2_WH</div>
<div class="t" style="left:673.47px;width:100px;text-align:center;top:338.85px;font-size:14px;font-weight:400;color:#5c5c5c;">2</div>
<div class="t" style="left:834.24px;width:100px;text-align:center;top:338.85px;font-size:14px;font-weight:400;color:#5c5c5c;">No</div>
<div class="t" style="left:995.01px;width:100px;text-align:center;top:338.85px;font-size:14px;font-weight:400;color:#5c5c5c;">0</div>
<svg class="a" style="left:1199.28px;top:337.10px" width="14" height="14"><rect x="1.5" y="1.5" width="11" height="11" fill="#fbfbfb" stroke="#6f6f6f" stroke-width="1.1"/></svg>
<div class="t" style="left:2.2px;top:375.15px;font-size:14px;font-weight:400;color:#5c5c5c;">GF1</div>
<div class="t" style="left:162.97px;top:375.15px;font-size:14px;font-weight:400;color:#5c5c5c;">Coater To Warehouse</div>
<div class="t" style="left:323.74px;top:375.15px;font-size:14px;font-weight:400;color:#5c5c5c;">Manual GF1 to Whse</div>
<div class="t" style="left:484.51000000000005px;top:375.15px;font-size:14px;font-weight:400;color:#5c5c5c;">Man_GF1_to_Whse</div>
<div class="t" style="left:673.47px;width:100px;text-align:center;top:375.15px;font-size:14px;font-weight:400;color:#5c5c5c;">2</div>
<div class="t" style="left:834.24px;width:100px;text-align:center;top:375.15px;font-size:14px;font-weight:400;color:#5c5c5c;">No</div>
<div class="t" style="left:995.01px;width:100px;text-align:center;top:375.15px;font-size:14px;font-weight:400;color:#5c5c5c;">0</div>
<svg class="a" style="left:1199.28px;top:373.40px" width="14" height="14"><rect x="1.5" y="1.5" width="11" height="11" fill="#f4f4f4" stroke="#6f6f6f" stroke-width="1.1"/><path d="M3.8 6.8 L6.2 9.6 L10.8 3.4" fill="none" stroke="#555" stroke-width="1.9"/></svg>
<div class="t" style="left:2.2px;top:411.45px;font-size:14px;font-weight:400;color:#5c5c5c;">GF1</div>
<div class="t" style="left:162.97px;top:411.45px;font-size:14px;font-weight:400;color:#5c5c5c;">Coater To Warehouse</div>
<div class="t" style="left:323.74px;top:411.45px;font-size:14px;font-weight:400;color:#5c5c5c;">Manual GF2 to Whse</div>
<div class="t" style="left:484.51000000000005px;top:411.45px;font-size:14px;font-weight:400;color:#5c5c5c;">Man_GF2_to_Whse</div>
<div class="t" style="left:673.47px;width:100px;text-align:center;top:411.45px;font-size:14px;font-weight:400;color:#5c5c5c;">2</div>
<div class="t" style="left:834.24px;width:100px;text-align:center;top:411.45px;font-size:14px;font-weight:400;color:#5c5c5c;">No</div>
<div class="t" style="left:995.01px;width:100px;text-align:center;top:411.45px;font-size:14px;font-weight:400;color:#5c5c5c;">0</div>
<svg class="a" style="left:1199.28px;top:409.70px" width="14" height="14"><rect x="1.5" y="1.5" width="11" height="11" fill="#f4f4f4" stroke="#6f6f6f" stroke-width="1.1"/><path d="M3.8 6.8 L6.2 9.6 L10.8 3.4" fill="none" stroke="#555" stroke-width="1.9"/></svg>
</div>
<div class="a" style="left:317.5px;top:381.8px;width:1286.2px;height:38.7px;background:#5f5f5d"></div>
<div class="t" style="left:297.88px;width:200px;text-align:center;top:395.60px;font-size:17.6px;font-weight:700;color:#fff;">Line</div>
<div class="t" style="left:458.65px;width:200px;text-align:center;top:395.60px;font-size:17.6px;font-weight:700;color:#fff;">Mission Type</div>
<div class="t" style="left:619.42px;width:200px;text-align:center;top:395.60px;font-size:17.6px;font-weight:700;color:#fff;">Mission Name</div>
<div class="t" style="left:780.20px;width:200px;text-align:center;top:395.60px;font-size:17.6px;font-weight:700;color:#fff;">MissionCode</div>
<div class="t" style="left:940.97px;width:200px;text-align:center;top:395.60px;font-size:17.6px;font-weight:700;color:#fff;"># Legs</div>
<div class="t" style="left:1101.73px;width:200px;text-align:center;top:395.60px;font-size:17.6px;font-weight:700;color:#fff;">Has Attributes?</div>
<div class="t" style="left:1262.51px;width:200px;text-align:center;top:395.60px;font-size:17.6px;font-weight:700;color:#fff;"># Attributes</div>
<div class="t" style="left:1423.28px;width:200px;text-align:center;top:395.60px;font-size:17.6px;font-weight:700;color:#fff;">AssignInventor...</div>
<div class="a" style="left:316.5px;top:381.8px;width:1.5px;height:462.0px;background:#6a6a6a"></div>
<div class="a" style="left:316.5px;top:843.3px;width:1343.0px;height:1.5px;background:#777"></div>
<div class="a" style="left:1603.7px;top:381.8px;width:55.8px;height:39.2px;background:#fefefe;border:1px solid #7a7a7a;border-left:none"></div>
<div class="a" style="left:1603.7px;top:755px;width:55.8px;height:36px;background:linear-gradient(90deg,#e8e8e7,#f3f3f2 60%,#f6f6f5)"></div>
<div class="a" style="left:1603.7px;top:421.5px;width:55.8px;height:53px;background:linear-gradient(90deg,#fdfdfd,#f1f1f1 70%,#e0e0e0);border:1px solid #858585;border-bottom:1.5px solid #777"></div>
<svg class="a" style="left:1603.7px;top:421.5px" width="55.8" height="53"><path d="M13.5 31.5 L27.5 18.5 L41.5 31.5 Z" fill="#555"/></svg>
<div class="a" style="left:1603.7px;top:476px;width:55.8px;height:280px;background:linear-gradient(90deg,#cfd3d6,#c2c6c9 55%,#aeafb0);border-left:1px solid #999;border-right:1.5px solid #6f6f6f;border-bottom:1.5px solid #6f6f6f;border-top:1px solid #b5b5b5"></div>
<div class="a" style="left:1606.7px;top:609px;width:49.8px;height:1px;background:#e4e6e8"></div>
<div class="a" style="left:1606.7px;top:612px;width:49.8px;height:1px;background:#e4e6e8"></div>
<div class="a" style="left:1606.7px;top:615px;width:49.8px;height:1px;background:#e4e6e8"></div>
<div class="a" style="left:1606.7px;top:618px;width:49.8px;height:1px;background:#e4e6e8"></div>
<div class="a" style="left:1603.7px;top:790px;width:55.8px;height:54px;background:linear-gradient(90deg,#fbfbfb,#f1f1f0 70%,#dfdfde);border:1px solid #858585;border-bottom:1.5px solid #6f6f6f;border-right:1.5px solid #6f6f6f"></div>
<svg class="a" style="left:1603.7px;top:790px" width="55.8" height="54"><path d="M13.5 20.5 L41.5 20.5 L27.5 34 Z" fill="#555"/></svg>
<div class="a" style="left:300.2px;top:868.2px;width:190.8px;height:36.5px;background:#06dc06;border:1px solid #3a8a3a;border-radius:2px;box-shadow:0 1px 1px rgba(0,0,0,0.2)"></div><div class="t" style="left:295.60px;width:200px;text-align:center;top:882.02px;font-size:12.5px;font-weight:700;color:#1b4a1b;">ADD MISSION</div>
<div class="a" style="left:504.6px;top:868.2px;width:191.2px;height:36.5px;background:#fefe92;border:1px solid #8f8f6a;border-radius:2px;box-shadow:0 1px 1px rgba(0,0,0,0.2)"></div><div class="t" style="left:500.20px;width:200px;text-align:center;top:882.23px;font-size:12.25px;font-weight:700;color:#222;">EDIT MISSION</div>
<div class="a" style="left:710.8px;top:868.2px;width:190.8px;height:36.5px;background:#fe9c9c;border:1px solid #a07070;border-radius:2px;box-shadow:0 1px 1px rgba(0,0,0,0.2)"></div><div class="t" style="left:706.20px;width:200px;text-align:center;top:881.24px;font-size:11.65px;font-weight:700;color:#fde8e8;">DELETE MISSION</div>
<svg class="a" style="left:725px;top:689px" width="20" height="24"><path d="M4.2 3.5 L4.2 17.8 L7.6 14.6 L10.2 19.8 L12.6 18.7 L10.1 13.6 L14.9 13.6 Z" fill="#fff" stroke="#222" stroke-width="1.2" stroke-linejoin="round"/></svg></body></html>
